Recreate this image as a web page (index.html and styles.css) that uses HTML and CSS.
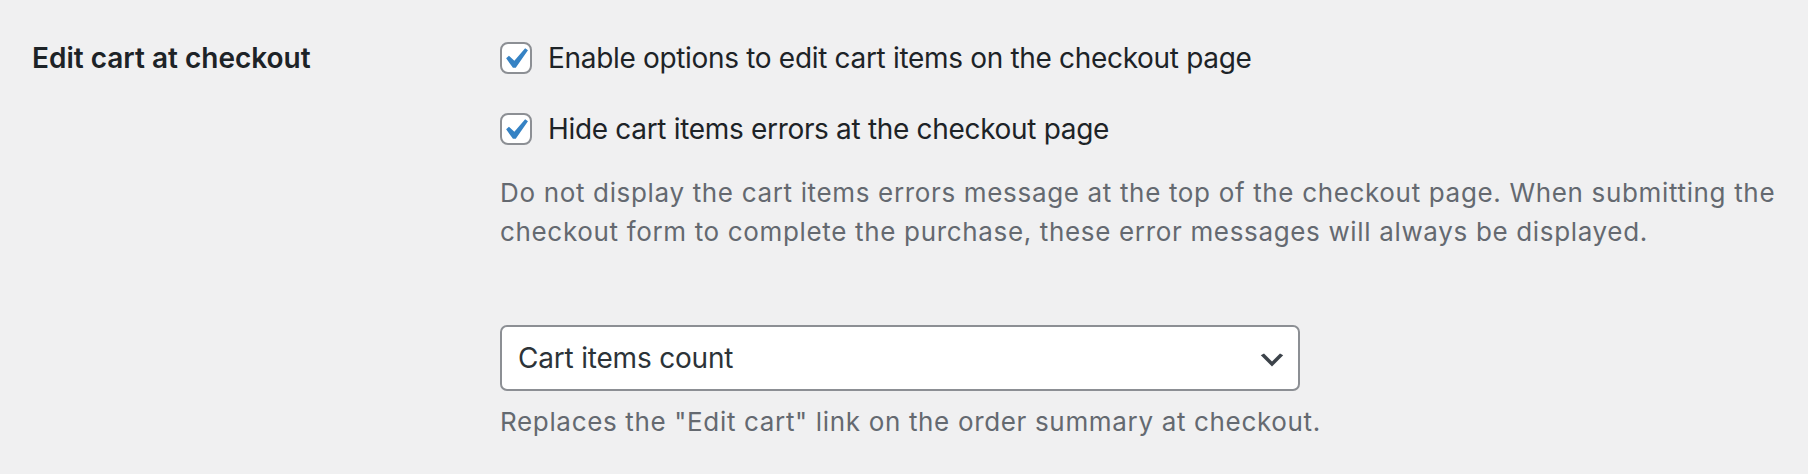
FILE: index.html
```html
<!DOCTYPE html>
<html lang="en">
<head>
<meta charset="utf-8">
<title>Edit cart at checkout</title>
<link rel="stylesheet" href="styles.css">
</head>
<body>
<div class="form-row">
  <div class="row-label">Edit cart at checkout</div>
  <div class="row-field">
    <label class="option option-first">
      <span class="checkbox">
        <svg class="check" viewBox="0 0 20 20" width="42" height="42" aria-hidden="true"><path d="M14.83 4.89l1.34.94-5.81 8.38H9.02L5.78 9.67l1.34-1.25 2.57 2.4z" fill="#3582c4"/></svg>
      </span>
      <span class="option-text">Enable options to edit cart items on the checkout page</span>
    </label>
    <label class="option option-second">
      <span class="checkbox">
        <svg class="check" viewBox="0 0 20 20" width="42" height="42" aria-hidden="true"><path d="M14.83 4.89l1.34.94-5.81 8.38H9.02L5.78 9.67l1.34-1.25 2.57 2.4z" fill="#3582c4"/></svg>
      </span>
      <span class="option-text">Hide cart items errors at the checkout page</span>
    </label>
    <p class="description desc-first">Do not display the cart items errors message at the top of the checkout page. When submitting the checkout form to complete the purchase, these error messages will always be displayed.</p>
    <div class="select">
      <span class="select-value">Cart items count</span>
      <svg class="chevron" viewBox="0 0 20 20" width="32" height="32" aria-hidden="true"><path d="M5 6l5 5 5-5 2 1-7 7-7-7 2-1z" fill="#3c434a"/></svg>
    </div>
    <p class="description desc-second">Replaces the "Edit cart" link on the order summary at checkout.</p>
  </div>
</div>
</body>
</html>
```
FILE: styles.css
```css
html, body {
  margin: 0;
  padding: 0;
}
body {
  background: #f0f0f1;
  font-family: Inter, "Noto Sans", "Liberation Sans", sans-serif;
  color: #1d2327;
  width: 1808px;
  height: 474px;
  overflow: hidden;
}
.form-row {
  display: grid;
  grid-template-columns: 468px 1fr;
  padding-left: 32px;
  padding-top: 38px;
}
.row-label {
  font-size: 28px;
  font-weight: 600;
  line-height: 40px;
  color: #1d2327;
}
.row-field {
  display: flex;
  flex-direction: column;
  align-items: flex-start;
  width: 1300px;
}
.option {
  display: flex;
  align-items: center;
  height: 40px;
  gap: 16px;
  font-size: 28px;
  letter-spacing: -0.32px;
  color: #1d2327;
}
.option-second {
  margin-top: 31px;
}
.checkbox {
  position: relative;
  width: 32px;
  height: 32px;
  box-sizing: border-box;
  border: 2px solid #8c8f94;
  border-radius: 8px;
  background: #fff;
  flex: none;
}
.check {
  position: absolute;
  left: -8px;
  top: -6px;
}
.description {
  margin: 0;
  font-size: 26px;
  letter-spacing: 0.66px;
  line-height: 39px;
  color: #646970;
}
.desc-first {
  margin-top: 24px;
}
.select {
  margin-top: 74px;
  width: 800px;
  height: 66px;
  box-sizing: border-box;
  border: 2px solid #8c8f94;
  border-radius: 7px;
  background: #fff;
  display: flex;
  align-items: center;
  justify-content: space-between;
  padding: 0 10px 0 16px;
  font-size: 28px;
  letter-spacing: -0.2px;
  color: #2c3338;
}
.chevron {
  margin-top: 3px;
}
.desc-second {
  margin-top: 11px;
}
```
